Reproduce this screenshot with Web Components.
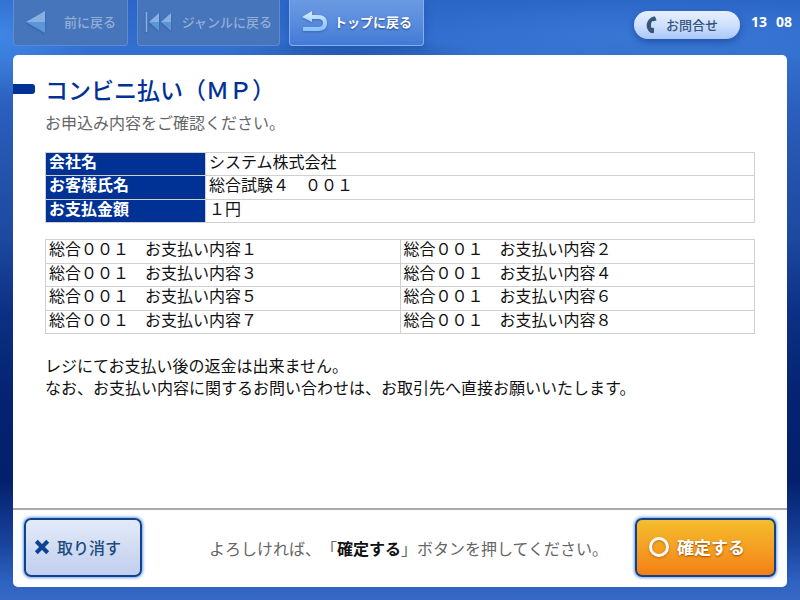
<!DOCTYPE html>
<html lang="ja">
<head>
<meta charset="UTF-8">
<meta name="viewport" content="width=device-width, initial-scale=1">
<title>コンビニ払い（ＭＰ）</title>
<style>
    body
    {
        margin: 0;
        font-family: "Noto Sans CJK JP", sans-serif;
        font-size: 16px;
        line-height: 22px;
        color: #111;
        text-spacing-trim: space-all;
    }
</style>
</head>
<body>
<kiosk-screen>
    <nav-button slot="nav" label="前に戻る" icon="back" size="s" off></nav-button>
    <nav-button slot="nav" label="ジャンルに戻る" icon="rewind" size="m" off></nav-button>
    <nav-button slot="nav" label="トップに戻る" icon="top" size="l"></nav-button>
    <help-button slot="tools">お問合せ</help-button>
    <kiosk-clock slot="tools" hour="13" minute="08"></kiosk-clock>

    <page-title>
        コンビニ払い（ＭＰ）
        <span slot="lead">お申込み内容をご確認ください。</span>
    </page-title>
    <customer-table></customer-table>
    <detail-table></detail-table>
    <notice-text>レジにてお支払い後の返金は出来ません。<br>なお、お支払い内容に関するお問い合わせは、お取引先へ直接お願いいたします。</notice-text>

    <action-button slot="actions" kind="cancel">取り消す</action-button>
    <guide-text slot="actions"></guide-text>
    <action-button slot="actions" kind="ok">確定する</action-button>
</kiosk-screen>

<script>
class BaseElement extends HTMLElement
{
    constructor(){
        super()
        this.attachShadow({ mode: "open" })
    }

    connectedCallback(){
        this.shadowRoot.innerHTML = this.render()
    }
}

class KioskScreen extends BaseElement
{
    render(){
        return `
            <style>
            :host
            {
                display: flex;
                flex-direction: column;
                box-sizing: border-box;
                min-height: 100vh;
                padding: 0 13px 13px;
                background:
                    radial-gradient(ellipse 90px 60px at 0 36px, #4592f0aa, transparent),
                    radial-gradient(ellipse 260px 34px at 82% 34px, #4080dc88, transparent),
                    radial-gradient(ellipse 130px 20px at 44% 56px, #1c4c9c99, transparent),
                    linear-gradient(#2c67c8, #3470cf 9%, #2a5cba 20%, #1c489f 40%, #0c3084 52%, #03226f 68%, #03206c 80%, #1a459f 91%, #2f62c2 97%, #3768c6);
            }
            header
            {
                display: flex;
                height: 55px;
                align-items: flex-start;
                justify-content: space-between;
                margin-right: -5px;
            }
            nav, .tools
            {
                display: flex;
                gap: 9px;
            }
            .panel
            {
                flex: 1;
                display: flex;
                flex-direction: column;
                background: #fff;
                border-radius: 5px;
            }
            main
            {
                flex: 1;
                padding: 22px 32px 16px;
            }
            footer
            {
                display: flex;
                align-items: center;
                justify-content: space-between;
                padding: 8px 11px 10px;
                border-top: 2px solid #aaa;
            }
            </style>
            <header>
                <nav><slot name="nav"></slot></nav>
                <div class="tools"><slot name="tools"></slot></div>
            </header>
            <div class="panel">
                <main><slot></slot></main>
                <footer><slot name="actions"></slot></footer>
            </div>
        `
    }
}

const icons = {
    back: `
        <svg width="22" height="24" viewBox="0 0 22 24">
            <path d="M1 12 L20 1 V12 Z" fill="#86b0e2"/>
            <path d="M1 12 H20 V23 Z" fill="#5c95d8"/>
        </svg>`,
    rewind: `
        <svg width="28" height="24" viewBox="0 0 28 24">
            <path d="M1.500 2 V22" stroke="#86b0e2" stroke-width="1.500"/>
            <path d="M4 12 L14 3 V12 Z M16 12 L26 3 V12 Z" fill="#86b0e2"/>
            <path d="M4 12 H14 V21 Z M16 12 H26 V21 Z" fill="#5c95d8"/>
        </svg>`,
    top: `
        <svg width="28" height="24" viewBox="0 0 28 24">
            <defs>
                <linearGradient id="g" x2="0" y2="1">
                    <stop offset="0" stop-color="#d5edff"/>
                    <stop offset="1" stop-color="#86c0ff"/>
                </linearGradient>
            </defs>
            <path d="M1 7 L11 1 V5 H17 C23 5 26 8 26 13 C26 18 23 21 17 21 H2 V17 H17 C20 17 22 16 22 13 C22 10 20 9 17 9 H11 V12 Z" fill="url(#g)"/>
        </svg>`
}

class NavButton extends BaseElement
{
    render(){
        const disabled = this.hasAttribute('off') ? 'disabled' : ''

        return `
            <style>
            :host { display: block; }
            :host([size="s"]) { width: 115px; }
            :host([size="m"]) { width: 143px; }
            :host([size="l"]) { width: 135px; }
            button
            {
                display: flex;
                align-items: center;
                justify-content: space-between;
                width: 100%;
                height: 46px;
                padding: 0 11px 2px;
                border: 1px solid #86adf0;
                border-top: 0;
                border-radius: 0 0 4px 4px;
                background: linear-gradient(#6b9ae2, #5a8cdd 50%, #437ad6);
                box-shadow: 0 3px 8px #1b4a9f80;
                color: #fff;
                font: bold 13px/20px "Noto Sans CJK JP", sans-serif;
                text-shadow: 0 1px 2px #1f4a90;
                white-space: nowrap;
            }
            :host([size="m"]) button { padding: 0 7px 2px; }
            button:disabled
            {
                border-color: #5d8cd2;
                background: #4675bb;
                box-shadow: none;
                color: #94afd6;
                font-weight: 500;
                text-shadow: none;
            }
            svg { filter: drop-shadow(0 1px 1px #1f4a9080); }
            </style>
            <button type="button" ${disabled}>
                ${icons[this.getAttribute('icon')]}
                <span>${this.getAttribute('label')}</span>
            </button>
        `
    }
}

class HelpButton extends BaseElement
{
    render(){
        return `
            <style>
            :host { display: block; margin-top: 11px; }
            button
            {
                display: flex;
                align-items: center;
                gap: 9px;
                width: 106px;
                height: 28px;
                padding: 0 12px;
                border: 0;
                border-radius: 14px;
                background: linear-gradient(#e8f0ff, #cfe0fc 50%, #a9c8fa);
                box-shadow: 0 3px 7px #123a8a99;
                color: #35557c;
                font: 500 13px/20px "Noto Sans CJK JP", sans-serif;
                white-space: nowrap;
            }
            </style>
            <button type="button">
                <svg width="11" height="18" viewBox="0 0 11 18">
                    <path d="M4 2.500 C5.500 1 7.500 0.500 9 0.500 L10.500 4 C10.500 5 7.500 5.500 6.500 5 C5 6.500 4.500 9.500 5.500 12 C6.500 11.500 8 12 8 12.500 L8 16.500 C7.500 17.500 4.500 17.500 3 15.500 C-0.500 11.500 0 6 4 2.500 Z" fill="#35557c"/>
                </svg>
                <slot></slot>
            </button>
        `
    }
}

class KioskClock extends BaseElement
{
    render(){
        return `
            <style>
            :host { display: block; margin-top: 12px; }
            time
            {
                display: flex;
                gap: 9px;
                padding-left: 2px;
                color: #fff;
                font: bold 14px/20px "Open Sans", sans-serif;
            }
            </style>
            <time><span>${this.getAttribute('hour')}</span><span>${this.getAttribute('minute')}</span></time>
        `
    }
}

class PageTitle extends BaseElement
{
    render(){
        return `
            <style>
            :host { display: block; margin-bottom: 19px; }
            .head
            {
                display: flex;
                align-items: center;
                gap: 10px;
                margin-left: -32px;
            }
            .head::before
            {
                content: "";
                width: 22px;
                height: 10px;
                border-radius: 0 3px 3px 0;
                background: #003296;
            }
            h1
            {
                margin: 0;
                color: #003296;
                font-size: 23px;
                font-weight: 500;
                line-height: 24px;
            }
            p
            {
                margin: 10px 0 0;
                color: #666;
            }
            </style>
            <div class="head"><h1><slot></slot></h1></div>
            <p><slot name="lead"></slot></p>
        `
    }
}

const tableStyle = `
    :host { display: block; margin-bottom: 16px; }
    table
    {
        width: 100%;
        border-collapse: collapse;
        table-layout: fixed;
        line-height: 16px;
    }
    th, td
    {
        padding: 0 3px 4px;
        border: 1px solid #d0d0d0;
        text-align: left;
        vertical-align: top;
    }
`

class CustomerTable extends BaseElement
{
    render(){
        const rows = [
            ['会社名', 'システム株式会社'],
            ['お客様氏名', '総合試験４　００１'],
            ['お支払金額', '１円']
        ]

        return `
            <style>
            ${tableStyle}
            table { height: 71px; }
            th
            {
                width: 153px;
                background: #003296;
                color: #fff;
            }
            </style>
            <table>
                ${rows.map(([name, value]) => `<tr><th scope="row">${name}</th><td>${value}</td></tr>`).join('')}
            </table>
        `
    }
}

class DetailTable extends BaseElement
{
    render(){
        const rows = [['１', '２'], ['３', '４'], ['５', '６'], ['７', '８']]
        const cell = n => `<td>総合００１　お支払い内容${n}</td>`

        return `
            <style>
            ${tableStyle}
            table { height: 95px; }
            </style>
            <table>
                ${rows.map(row => `<tr>${row.map(cell).join('')}</tr>`).join('')}
            </table>
        `
    }
}

class NoticeText extends BaseElement
{
    render(){
        return `
            <style>
            :host { display: block; margin-top: 20px; }
            p { margin: 0; }
            </style>
            <p><slot></slot></p>
        `
    }
}

class GuideText extends BaseElement
{
    render(){
        return `
            <style>
            :host { display: block; margin-left: 40px; color: #666; }
            p { margin: 0; }
            strong { color: #111; }
            </style>
            <p>よろしければ、「<strong>確定する</strong>」ボタンを押してください。</p>
        `
    }
}

class ActionButton extends BaseElement
{
    render(){
        const cancel = this.getAttribute('kind') === 'cancel'
        const icon = cancel
            ? '<svg width="16" height="16" viewBox="0 0 14 14"><path d="M2 2 L12 12 M12 2 L2 12" stroke="#0c4396" stroke-width="3.500"/></svg>'
            : '<svg width="22" height="22" viewBox="0 0 22 22"><circle cx="11" cy="11" r="8.500" fill="none" stroke="#fff" stroke-width="3"/></svg>'

        return `
            <style>
            :host { display: block; }
            button
            {
                display: flex;
                align-items: center;
                gap: 7px;
                width: 118px;
                height: 59px;
                padding: 0 8px 2px;
                border: 2px solid #0f4288;
                border-radius: 7px;
                background: linear-gradient(#e3ebf8, #cfdbf2 55%, #c2cff0);
                box-shadow: 0 0 3px 1px #6ea0ec;
                color: #1c4b80;
                font: 500 16px/22px "Noto Sans CJK JP", sans-serif;
                white-space: nowrap;
            }
            :host([kind="ok"]) button
            {
                width: 141px;
                padding: 0 11px 2px;
                background: linear-gradient(#f5bd2c, #f5a023 50%, #f47f16);
                color: #fff;
                font-size: 17px;
                font-weight: bold;
                text-shadow: 0 1px 2px #9a4a00;
            }
            :host([kind="ok"]) svg { filter: drop-shadow(0 1px 1px #9a4a0099); }
            </style>
            <button type="button">${icon}<slot></slot></button>
        `
    }
}

customElements.define("kiosk-screen", KioskScreen);
customElements.define("nav-button", NavButton);
customElements.define("help-button", HelpButton);
customElements.define("kiosk-clock", KioskClock);
customElements.define("page-title", PageTitle);
customElements.define("customer-table", CustomerTable);
customElements.define("detail-table", DetailTable);
customElements.define("notice-text", NoticeText);
customElements.define("guide-text", GuideText);
customElements.define("action-button", ActionButton);
</script>
</body>
</html>
